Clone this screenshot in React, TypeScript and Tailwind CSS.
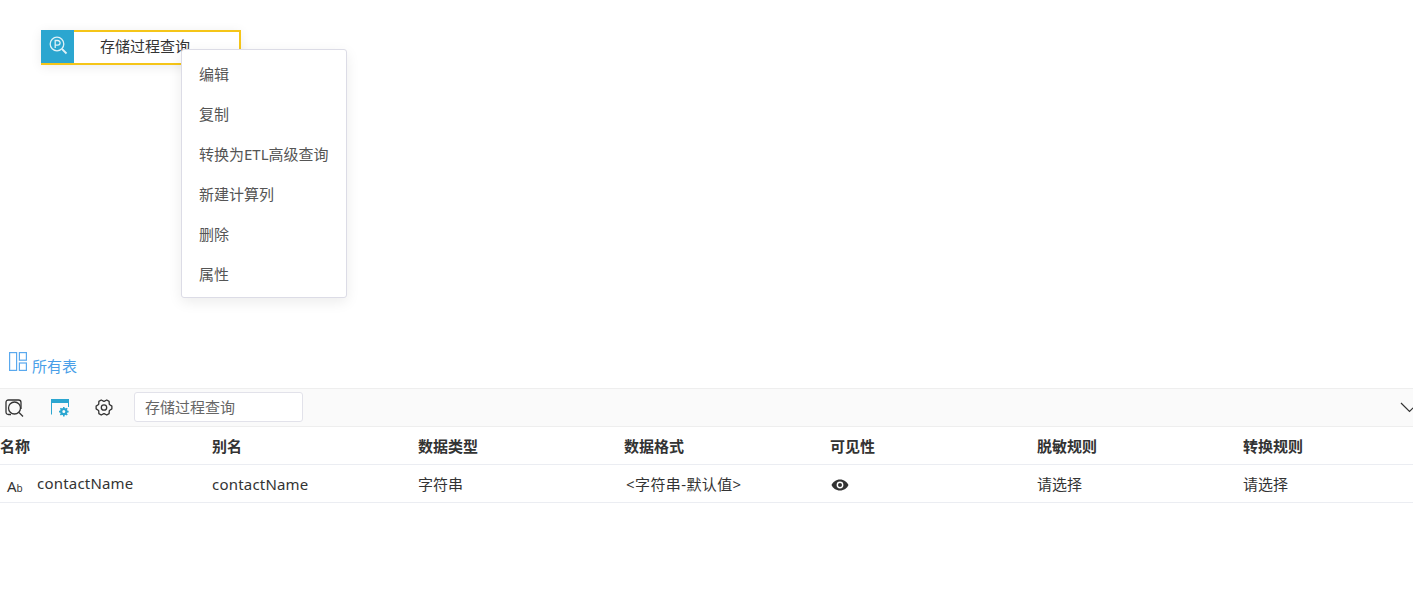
import React from 'react';

const font = { fontFamily: '"Noto Sans", "Noto Sans CJK SC", sans-serif' };

const columns = ['名称', '别名', '数据类型', '数据格式', '可见性', '脱敏规则', '转换规则'];
const menuItems = ['编辑', '复制', '转换为ETL高级查询', '新建计算列', '删除', '属性'];
const rowGrid = 'grid h-[38px] grid-cols-[212px_206px_206px_206px_207px_206px_206px] items-center border-b border-[#ebedf2] pt-[2px]';

// six lobes around the centre, valleys between them
const gearPoints = Array.from({ length: 6 }, (_, i) => {
  const a = (i * Math.PI) / 3;
  const at = (r: number, d: number) => `${(9 + r * Math.cos(a + d)).toFixed(2)},${(8.5 + r * Math.sin(a + d)).toFixed(2)}`;
  return [at(6.2, -0.5), at(8, -0.17), at(8, 0.17), at(6.2, 0.5)].join(' ');
}).join(' ');

function ProcIcon() {
  return (
    <svg width="20" height="20" viewBox="0 0 20 20" fill="none" stroke="#dff1f7" strokeWidth="1.3">
      <circle cx="9" cy="9" r="6.8" />
      <path d="M14 14 L18.5 18.5" strokeWidth="1.8" />
      <path d="M7.2 13 V5.5 H9.8 a2.2 2.2 0 0 1 0 4.6 H7.2" />
    </svg>
  );
}

function LayoutIcon() {
  return (
    <svg width="18" height="19" viewBox="0 0 18 19" fill="none" stroke="#5aa9ee" strokeWidth="1.2">
      <rect x="0.6" y="0.6" width="7" height="17.8" />
      <rect x="10.4" y="0.6" width="7" height="7.6" />
      <rect x="10.4" y="11" width="7" height="7.4" />
    </svg>
  );
}

function SearchSquareIcon() {
  return (
    <svg width="19" height="18" viewBox="0 0 19 18" fill="none" stroke="#333" strokeWidth="1.3">
      <path d="M6 15.5 H3.5 Q1 15.5 1 13 V3.5 Q1 1 3.5 1 H13.5 Q16 1 16 3.5 V10" />
      <circle cx="9.5" cy="9" r="6" />
      <path d="M14 13.5 L18 17.5" />
    </svg>
  );
}

function WindowGearIcon() {
  return (
    <svg width="18" height="18" viewBox="0 0 18 18" fill="none">
      <path d="M0.5 15.5 V0.5 H17.5 V8" stroke="#2ba6d0" />
      <rect x="0" y="0" width="18" height="4" fill="#2ba6d0" />
      <circle cx="12.8" cy="12.6" r="2.6" stroke="#2ba6d0" strokeWidth="2.2" />
      <path d="M12.8 8 V10 M12.8 15.4 V17.4 M8 12.6 H10 M15.6 12.6 H17.6 M9.4 9.2 L10.8 10.6 M16.2 9.2 L14.8 10.6 M9.4 16 L10.8 14.6 M16.2 16 L14.8 14.6" stroke="#2ba6d0" strokeWidth="1.6" />
    </svg>
  );
}

function GearIcon() {
  return (
    <svg width="18" height="17" viewBox="0 0 18 17" fill="none" stroke="#333" strokeWidth="1.3" strokeLinejoin="round">
      <polygon points={gearPoints} />
      <circle cx="9" cy="8.5" r="2.7" />
    </svg>
  );
}

function EyeIcon() {
  return (
    <svg width="18" height="12" viewBox="0 0 18 12">
      <path fillRule="evenodd" fill="#333" d="M9 0.5 C5 0.5 1.8 3 0.5 6 C1.8 9 5 11.5 9 11.5 C13 11.5 16.2 9 17.5 6 C16.2 3 13 0.5 9 0.5 Z M9 2.6 A3.4 3.4 0 1 1 9 9.4 A3.4 3.4 0 1 1 9 2.6 Z" />
      <circle cx="9" cy="6" r="2" fill="#333" />
    </svg>
  );
}

export default function App() {
  return (
    <div className="h-[611px] w-[1413px] overflow-hidden bg-white text-[15px] text-[#333]" style={font}>
      <div className="relative h-[350px]">
        <div className="absolute left-[41px] top-[30px] flex h-[35px] w-[200px] bg-white shadow-[0_2px_12px_rgba(0,0,0,0.08)]">
          <div className="flex h-[35px] w-[33px] shrink-0 items-start justify-center border-b-2 border-[#f5c518] bg-[#2ba6d0] pt-[5px]">
            <ProcIcon />
          </div>
          <div className="flex-1 border-y-2 border-r-2 border-[#f5c518] pl-[26px] pt-[3px] leading-[22px] text-[#333]">存储过程查询</div>
        </div>

        <ul className="absolute left-[181px] top-[49px] w-[166px] rounded-[3px] border border-[#dcdce6] bg-white pb-[3px] pt-[4px] shadow-[0_4px_14px_rgba(0,0,0,0.08)]">
          {menuItems.map((item) => (
            <li key={item} className="flex h-[40px] items-center pl-[17px] text-[#555]">{item}</li>
          ))}
        </ul>
      </div>

      <div className="flex h-[38px] items-start gap-[5px] pl-[9px] pt-[2px] text-[#4a9fe8]">
        <LayoutIcon />
        <span className="mt-[3px] leading-[22px]">所有表</span>
      </div>

      <div className="flex h-[39px] items-center border-y border-[#eeeeee] bg-[#fafafa]">
        <div className="ml-[5px] flex w-[19px] justify-center"><SearchSquareIcon /></div>
        <div className="ml-[27px] flex w-[18px] justify-center"><WindowGearIcon /></div>
        <div className="ml-[26px] flex w-[18px] justify-center"><GearIcon /></div>
        <div className="mb-[2px] ml-[21px] flex h-[30px] w-[169px] items-center rounded-[3px] border border-[#e2e2ea] bg-white pl-[10px] leading-[26px] text-[#666]">存储过程查询</div>
        <div className="ml-auto mr-[-7px]">
          <svg width="20" height="11" viewBox="0 0 20 11" fill="none" stroke="#333" strokeWidth="1.2">
            <path d="M1 1 L9.5 9.5 L18 1" />
          </svg>
        </div>
      </div>

      <div className="w-[1449px]">
        <div className={`${rowGrid} font-bold text-[#333]`}>
          {columns.map((c) => (
            <div key={c}>{c}</div>
          ))}
        </div>
        <div className={rowGrid}>
          <div className="flex items-center">
            <span className="ml-[7px] mt-[3px] w-[30px] text-[15px] leading-none">A<span className="text-[10px]">b</span></span>
            <span className="mb-[2px] tracking-[0.2px]">contactName</span>
          </div>
          <div className="tracking-[0.2px]">contactName</div>
          <div>字符串</div>
          <div className="pl-[2px] tracking-[0.4px]">{'<字符串-默认值>'}</div>
          <div className="pl-[1px]"><EyeIcon /></div>
          <div>请选择</div>
          <div>请选择</div>
        </div>
      </div>
    </div>
  );
}
